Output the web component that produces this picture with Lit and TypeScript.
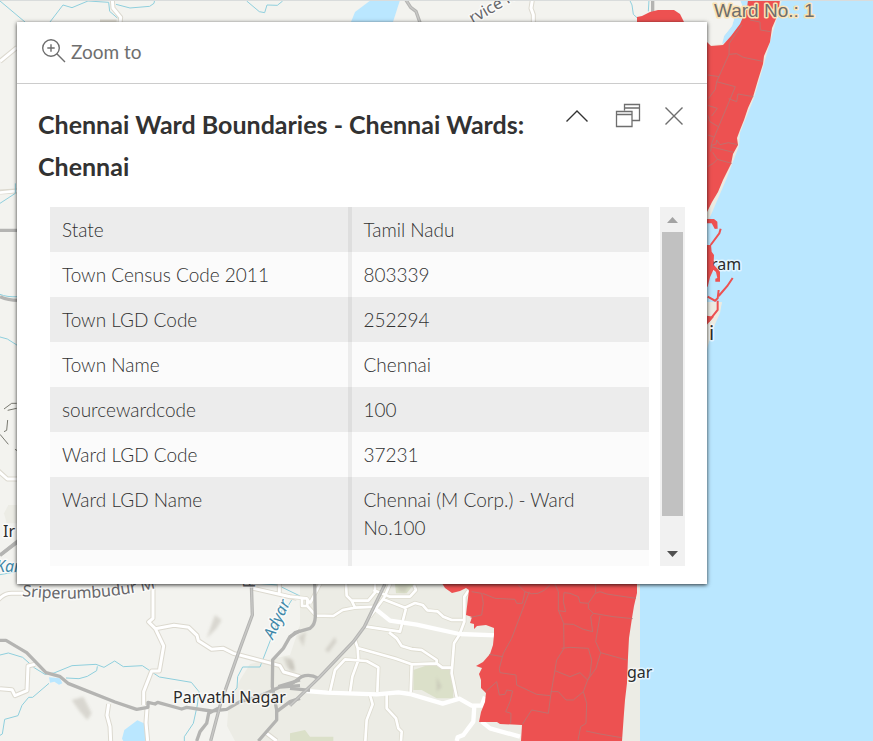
import { LitElement, html, css, svg } from "lit";
import { customElement, property } from "lit/decorators.js";

/* Base map: land, water, roads, ward polygons and place labels. */
@customElement("ward-map")
export class WardMap extends LitElement {
  static styles = css`
    :host { display: block; overflow: hidden; background: #f3f3ef; }
    svg { display: block; width: 100%; height: 100%; }
    .city { fill: #ecece5; }
    .land { fill: #f3f3ef; }
    .park { fill: #dbe0c9; }
    .sand { fill: #ecebe2; }
    .sea { fill: #bae7ff; }
    .hill { fill: #b9b5ab; opacity: 0.45; filter: blur(4px); }
    .rural, .minor, .major, .river, .rail, .casing, .edge { fill: none; stroke-linejoin: round; }
    .river { stroke: #8fcfdd; stroke-width: 3; }
    .casing { stroke: #dcd9cf; stroke-width: 15; }
    .rural { stroke: #ffffff; stroke-width: 9; }
    .case2 { fill: none; stroke: #dedcd0; stroke-width: 13; stroke-linejoin: round; }
    .minor { stroke: #ffffff; stroke-width: 8; }
    .major { stroke: #ffffff; stroke-width: 13; }
    .rail { stroke: #b4b4b2; stroke-width: 10; }
    .core { fill: none; stroke: #c8c8c6; stroke-width: 4; }
    .dark { fill: none; stroke: #77776f; stroke-width: 3; }
    .red { fill: #ed5151; }
    .redline { fill: none; stroke: #ed5151; stroke-width: 6; }
    .edge { stroke: #c0706d; stroke-width: 3; }
    .frame { fill: #d9dcdc; }
    text {
      font-family: "Noto Sans", sans-serif;
      font-size: 16px;
      fill: #2b2b2b;
      stroke: rgba(255, 255, 255, 0.6);
      stroke-width: 3px;
      stroke-linejoin: round;
      paint-order: stroke;
    }
    .road { fill: #66666a; }
    .stream { fill: #3f87a8; font-style: italic; }
    .big { font-size: 20px; }
    .ward {
      font-family: "Liberation Sans", sans-serif;
      font-size: 19px;
      fill: #6e6e6e;
      stroke: #fbe3b4;
    }
  `;

  render() {
    return html`<svg viewBox="0 0 873 741" preserveAspectRatio="xMinYMin slice" role="img" aria-label="Map of Chennai wards">
      ${this.land()} ${this.labels()} ${this.north()} ${this.south()} ${this.wardLabel()}
    </svg>`;
  }

  private land() {
    return svg`
      <path class="sand" d="M700 0H784L775 34L766 64L756 99L742 138L740 146L728 178L710 217V302H724L709 342L637 584V741H600Z"/>
      <path class="sea" d="M873 0H782L773 32L764 64L754 98L740 133L739 146L726 180L710 217L700 240V302H722L708 345L690 420L637 584V593L633 610L629 638L628 657L627 683L624 713L622 741H873Z"/>
      <path class="sea" d="M740 0H750L740 28L728 41L722 44L724 36L732 26L735 16L744 10Z"/>
      <path class="land" d="M684 0H740L744 10L735 16L732 26L724 36L722 44L700 46V22H684Z"/>
      <path class="sea" d="M351 22L355 12L371 0H400L393 22Z"/>
      <path class="city" d="M300 584H640V741H235L227 726L229 700L240 680L250 664L290 655L300 625Z"/>

      <g transform="scale(.33333)">
        <path class="river" d="M0 3L75 66M150 66L189 15L216 23L264 3L326 7L329 34L352 54M348 13L390 24L449 19L462 10L464 0M740 3L778 35L794 38L801 15L832 16L848 3"/>
        <path class="casing" d="M337 0L339 24L362 52L360 70M0 184L51 142M300 66L350 66"/>
        <path class="rural" d="M337 0L339 24L362 52L360 70M0 184L51 142"/>
      </g>
      <g transform="translate(0 80) scale(.33333)">
        <path class="casing" d="M0 336L60 332M-6 1172L22 1197H60"/>
        <path class="rural" d="M-6 1172L22 1197H60"/>
        <path class="minor" d="M0 338L60 332"/>
        <path class="river" d="M0 370L46 340V310M0 643Q20 652 56 650M0 771L22 777L52 796"/>
        <path class="rail" d="M0 451H55M0 650Q22 661 55 661M0 1425L55 1382"/>
        <path class="dark" d="M12 987L35 970H50M23 991L50 985M23 1020L20 1051L12 1055M0 1063L25 1093M45 1108L52 1112"/>
        <path class="city" d="M12 1300L25 1275H60V1330H20Z"/>
      </g>

      <g transform="translate(340 0) scale(.33333)">
        <path class="casing" d="M577 0L573 25L580 44V70"/>
        <path class="rural" d="M577 0L573 25L580 44V70"/>
        <path class="rail" d="M198 0L212 22L228 34L240 68M938 0V36"/>
        <path class="core" d="M198 0L212 22L228 34L240 68"/>
        <path class="river" d="M869 0L876 15L880 43L893 55M927 0L925 34"/>
      </g>

      <g transform="translate(0 540) scale(.33333)">
        <path class="hill" d="M215 480L250 470L275 520L262 540L240 515Z"/>
        <path class="hill" d="M645 225L665 240L650 265L620 295Z"/>
        <path class="hill" d="M850 350L880 360L885 400L860 380Z"/>
        <path class="sea" d="M366 596L373 570L412 541L437 552L440 603H370Z"/>
        <path class="sea" d="M147 412L180 415L187 430L177 434L163 425L150 428Z"/>
        <path class="river" d="M0 345L25 339L68 352L104 384L135 403L162 399L216 377L288 373L312 382L344 363L370 380L427 377L478 411L574 427L597 455L592 495L580 550L553 590V603M292 379L290 392L262 409L237 416L198 414M147 430L98 472H86L66 496L54 527L14 538L7 582L0 586M875 180L861 203L850 201L780 381H728L713 410L711 444L692 465"/>
        <path class="river" d="M0 104L51 95M740 127L832 135L900 168"/>
        <path class="casing" d="M-10 185Q10 160 35 160H70M459 130V235L446 246L466 266L491 318L478 393H455L431 455V495M441 505L438 548L443 603M466 266L522 256L566 262L591 286L595 302L635 328L670 325L700 340L840 377L851 396L900 410M0 446L36 449L45 467L81 452L84 378L105 373M326 492L321 526L330 560L332 603M760 145L838 163L890 175M838 130V158M800 580L830 603"/>
        <path class="rural" d="M-10 185Q10 160 35 160H70M459 130V235L446 246L466 266L491 318L478 393H455L431 455V495M441 505L438 548L443 603M466 266L522 256L566 262L591 286L595 302L635 328L670 325L700 340L840 377L851 396L900 410M0 446L36 449L45 467L81 452L84 378L105 373M326 492L321 526L330 560L332 603M760 145L838 163L890 175M838 130V158M800 580L830 603"/>
        <path class="rail" d="M0 46L50 8M0 301H18L80 338L138 398L179 409L204 430L345 486L410 508L444 502V487L465 492L473 487L545 507L560 502L634 513L680 508L720 485L775 470L840 441L900 437M754 130L757 225L720 325L662 490L632 603M590 603L600 575L620 550L626 520L655 505M775 603L830 540V510L817 440L818 360L850 325L870 290L900 272M830 515L870 485L900 475M835 440L900 420"/>
        <path class="core" d="M754 130L757 225L720 325L662 490L632 603"/>
      </g>

      <g transform="translate(290 560) scale(.33333)">
        <path class="park" d="M370 330L405 318L440 318L455 328L487 328L490 415L440 415L395 390L370 390ZM315 72H372L350 100L318 100ZM0 520L45 510L60 530L130 530V543H0Z"/>
        <path class="hill" d="M105 270L135 230L140 245L115 278ZM440 350L455 380L440 395ZM-5 290L15 325L0 330ZM322 78H355L345 98L325 92ZM25 230L48 215L40 260Z"/>
        <path class="case2" d="M78 167L130 168L158 150L195 143L262 140M168 72L170 107L185 122H235L255 98V72M185 122L195 143M250 90L300 110H360L378 90L372 75M300 72L283 112L240 170M278 117L345 143L375 129L398 135L412 151L442 154L460 170L485 180H520M348 145L330 215L228 200M297 217L320 235L335 258L365 267L395 270L440 300V310L365 313L318 296L203 264L195 240M203 264L205 300L187 350L180 397M120 395L135 330L165 298L230 303L265 322L262 397M365 313L362 397M440 310L457 323H487M535 92L523 110V185L508 225L492 250L485 340L500 412M240 405L248 433L230 480L226 543M290 405V445L318 475L325 505L335 515L333 543M0 110L50 115L60 130M36 115V138H52V115M52 138L78 167M60 130L90 72"/>
        <path class="minor" d="M78 167L130 168L158 150L195 143L262 140M168 72L170 107L185 122H235L255 98V72M185 122L195 143M250 90L300 110H360L378 90L372 75M300 72L283 112L240 170M278 117L345 143L375 129L398 135L412 151L442 154L460 170L485 180H520M348 145L330 215L228 200M297 217L320 235L335 258L365 267L395 270L440 300V310L365 313L318 296L203 264L195 240M203 264L205 300L187 350L180 397M120 395L135 330L165 298L230 303L265 322L262 397M365 313L362 397M440 310L457 323H487M535 92L523 110V185L508 225L492 250L485 340L500 412M240 405L248 433L230 480L226 543M290 405V445L318 475L325 505L335 515L333 543M0 110L50 115L60 130M36 115V138H52V115M52 138L78 167M60 130L90 72"/>
        <path class="major" d="M258 148L300 182L380 194L508 222L640 227M50 393L110 398L260 403L325 397L360 402L458 431L508 416L545 437H575L585 410M553 437L550 485L520 525L503 532L500 543M575 485L600 505L690 530"/>
        <path class="rail" d="M74 72L76 170Q75 195 60 205L15 218L0 232M285 72L223 200L190 245L85 355L0 437M0 375L35 350Q60 340 85 355M0 385L60 391"/>
        <path class="core" d="M285 72L223 200L190 245L85 355L0 437"/>
      </g>
    `;
  }

  private north() {
    return svg`
      <path class="red" d="M748 0H780L778 14L772 28L770 42L764 56L763 64L758 80L753 97L748 108L744 120L740 130L737 138L738 145L733 154L731 164L723 180L718 192L712 202L707 212H690V42H707L711 46L723 45L731 36L740 24L747 8Z"/>
      <path class="red" d="M637 30V17L642 16L650 12L658 10H674L680 14L684 22V30Z"/>
      <g transform="translate(640 0) scale(.33333)">
        <path class="edge" d="M330 60L360 66L361 90L392 95M305 75L268 130L267 163L230 245L226 268L205 296M267 163L290 161L310 172L368 184M203 225L238 230M230 245L286 260L215 430L212 455M266 296L290 305L294 282L340 290M203 316L232 325L215 348M203 345L210 365L235 380M203 405L220 410M212 437L228 432L230 420L240 434L265 428L293 434M212 440L280 457M218 457L232 478L275 490M203 500L220 490L232 478"/>
      </g>
      <g transform="translate(640 180) scale(.33333)">
        <path class="redline" d="M200 122H218L228 145M242 146L238 160L212 195M203 350L225 362L233 355L236 330M233 362V390L205 425M278 294L262 318L236 348"/>
        <path class="red" d="M198 195H213L215 215L222 225L220 270L210 292L203 320H198ZM222 255L240 275V305H226V296L232 294L228 276L218 268ZM200 407L222 410L200 435ZM198 117H222L232 125L233 146H224L215 130H198Z"/>
      </g>
    `;
  }

  private south() {
    return svg`
      <path class="red" d="M440 580L445 588L452 593L460 591L466 588L469 590L468 598L466 615L472 617L470 623L474 624V629L477 626L486 625L494 628V635L493 645L490 654L483 662L476 666L482 668L479 674L481 680V688L486 693L485 702L481 712L479 722L497 722L500 724L522 725L521 741H622L624 713L625 700L627 683L628 657L629 638L632 618L634 606L637 593V580Z"/>
      <g transform="translate(440 560) scale(.33333)">
        <path class="edge" d="M95 95L125 100L130 130L125 165L92 172M128 100L165 115L225 118L230 130H247L255 95L235 75M255 95Q295 115 330 75M268 95L215 235L190 280L178 325L180 338L228 345L230 375L290 403L332 407L325 460L275 450L247 493M148 283L187 290M345 72L355 95V150L371 190L372 265L350 300L345 330L332 407M355 152L377 155L370 125L372 98L390 100L415 110L420 128L445 130V145L460 160L452 170L458 215L430 208L400 193L371 192M467 72V98L445 130M467 100L480 95L500 102L588 115M460 160L520 170L578 176M480 168L467 245L482 278L560 300M482 278L468 325L443 360L430 395L440 430L438 490L422 500L414 541M438 513L480 522L545 533M365 265L390 262L445 265L455 300L450 345L443 360L420 338L390 350L345 332M332 395L355 395L378 420H400L430 395M137 395L170 365L178 405L195 403L200 390L218 393L210 425L197 455L213 460L212 490"/>
      </g>
    `;
  }

  private labels() {
    return svg`
      <path class="sand" d="M706 317L722 302L720 313L708 340Z"/>
      <defs>
        <path id="highway" d="M22 596Q90 604 156 588"/>
        <path id="service" d="M473 24Q496 11 535 -12"/>
      </defs>
      <text x="711" y="270">ram</text>
      <text class="big" x="709" y="340">i</text>
      <text x="627" y="678">gar</text>
      <text x="173" y="703">Parvathi Nagar</text>
      <text x="3" y="537">Ir</text>
      <text class="stream" x="-4" y="572">Kan</text>
      <text class="stream" transform="translate(273 640) rotate(-65)">Adyar</text>
      <text class="road" transform="translate(255 588) rotate(-90)">R</text>
      <text class="road"><textPath href="#highway">Sriperumbudur M</textPath></text>
      <text class="road"><textPath href="#service">rvice R</textPath></text>
    `;
  }

  private wardLabel() {
    return svg`
      <text class="ward" x="714" y="17">Ward No.: 1</text>
      <rect class="frame" width="873" height="1" />
    `;
  }
}

/* Pop-up with the attributes of the selected ward. */
@customElement("feature-popup")
export class FeaturePopup extends LitElement {
  @property() heading = "";
  @property({ attribute: false }) rows: [string, string][] = [];

  static styles = css`
    :host {
      display: flow-root;
      background: #ffffff;
      color: #323232;
      font-family: Lato, "Open Sans", sans-serif;
      box-shadow: 0 1px 4px rgba(0, 0, 0, 0.8);
    }
    button { border: 0; padding: 0; background: none; font: inherit; color: inherit; display: flex; cursor: pointer; }
    svg { display: block; fill: none; stroke: #6e6e6e; }
    .actions { display: flex; height: 62px; padding: 0 24px; border-bottom: 1px solid #cccccc; box-sizing: border-box; }
    .zoom { align-items: center; gap: 4px; height: 58px; color: #6e6e6e; font-size: 19px; }
    .head { display: flex; justify-content: space-between; gap: 20px; padding: 19px 20px 0 21px; }
    h1 { margin: 0; font-size: 25px; line-height: 42px; font-weight: 700; }
    .tools { display: flex; gap: 20px; flex: none; }
    .tools button { height: 26px; width: 26px; align-items: center; justify-content: center; }
    .tools .first { margin-right: 5px; }
    .first svg { stroke: #323232; }
    .body { display: flex; gap: 11px; height: 359px; margin: 20px 22px 18px 33px; }
    .view { flex: 1; overflow: hidden; }
    table { width: 100%; border-collapse: collapse; table-layout: fixed; font-size: 19px; line-height: 28px; }
    th, td { padding: 9px 12px 8px; text-align: left; vertical-align: top; font-weight: 300; }
    th { width: 50%; box-sizing: border-box; border-right: 4px solid rgba(0, 0, 0, 0.06); }
    tr { background: #fbfbfb; }
    tr:nth-child(odd) { background: #ececec; }
    .bar { display: flex; flex-direction: column; width: 25px; background: #f1f1f1; }
    .bar button { height: 25px; align-items: center; justify-content: center; }
    .bar svg { stroke: none; }
    .bar .up { fill: #a3a3a3; }
    .bar .down { fill: #505050; }
    .track { flex: 1; padding: 0 2px; }
    .thumb { height: 92%; background: #c1c1c1; }
  `;

  render() {
    return html`
      <div class="actions">
        <button class="zoom">
          <svg width="26" height="26" viewBox="0 0 26 26" stroke-width="1.4" aria-hidden="true">
            <circle cx="10" cy="10" r="8.3" /><path d="M10 6.3V13.7M6.3 10H13.7M15.8 15.8L24 24" />
          </svg>
          Zoom to
        </button>
      </div>
      <div class="head">
        <h1>${this.heading}</h1>
        <div class="tools">
          <button class="first" aria-label="Collapse">
            <svg width="26" height="26" viewBox="0 0 26 26" stroke-width="1.4"><path d="M2.5 18.5L13 8L23.5 18.5" /></svg>
          </button>
          <button aria-label="Dock">
            <svg width="26" height="26" viewBox="0 0 26 26" stroke-width="1.3">
              <path d="M9.5 7.5V1.5H24.5V17.5H17.5M9.5 5H24.5M1.5 8.5H17V23.5H1.5ZM1.5 11.5H17" />
            </svg>
          </button>
          <button aria-label="Close">
            <svg width="26" height="26" viewBox="0 0 26 26" stroke-width="1.4"><path d="M4.5 4.5L21.5 21.5M21.5 4.5L4.5 21.5" /></svg>
          </button>
        </div>
      </div>
      <div class="body">
        <div class="view">
          <table>
            <tbody>
              ${this.rows.map(([k, v]) => html`<tr><th scope="row">${k}</th><td>${v}</td></tr>`)}
            </tbody>
          </table>
        </div>
        <div class="bar">
          <button aria-label="Scroll up"><svg class="up" width="11" height="6"><path d="M5.5 0L11 6H0Z" /></svg></button>
          <div class="track"><div class="thumb"></div></div>
          <button aria-label="Scroll down"><svg class="down" width="11" height="6"><path d="M0 0H11L5.5 6Z" /></svg></button>
        </div>
      </div>
    `;
  }
}

@customElement("app-root")
export class AppRoot extends LitElement {
  static styles = css`
    :host { display: block; position: relative; min-height: 100vh; overflow: hidden; }
    .map { position: absolute; inset: 0; }
    .popup { position: relative; width: min(690px, calc(100% - 34px)); margin: 22px 17px; }
    .stage { display: flow-root; }
  `;

  private rows: [string, string][] = [
    ["State", "Tamil Nadu"],
    ["Town Census Code 2011", "803339"],
    ["Town LGD Code", "252294"],
    ["Town Name", "Chennai"],
    ["sourcewardcode", "100"],
    ["Ward LGD Code", "37231"],
    ["Ward LGD Name", "Chennai (M Corp.) - Ward No.100"],
    ["Ward", ""],
  ];

  render() {
    return html`
      <ward-map class="map"></ward-map>
      <div class="stage">
        <feature-popup class="popup" .heading=${"Chennai Ward Boundaries - Chennai Wards: Chennai"} .rows=${this.rows}></feature-popup>
      </div>
    `;
  }
}
